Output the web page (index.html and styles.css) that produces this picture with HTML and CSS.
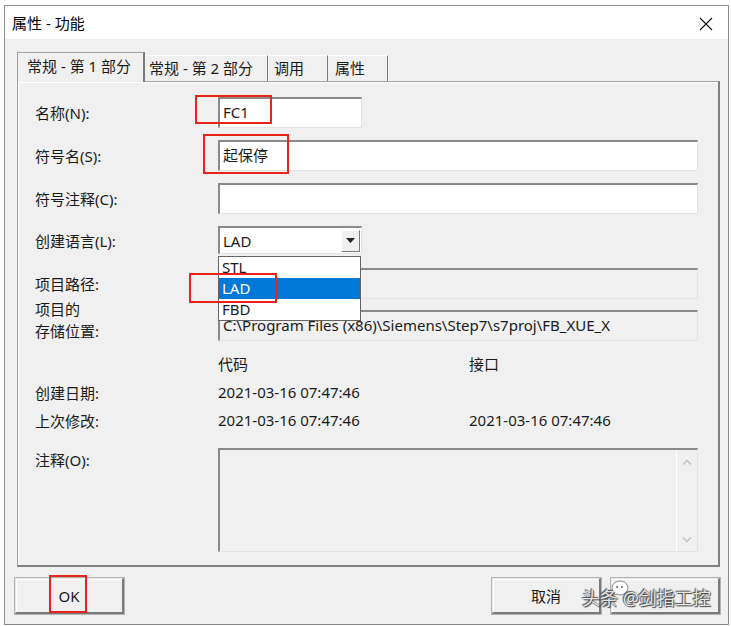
FILE: index.html
```html
<!DOCTYPE html>
<html lang="zh-CN">
<head>
    <meta charset="UTF-8">
    <title>属性 - 功能</title>
    <link rel="stylesheet" href="styles.css">
</head>
<body>
    <div class="window">
        <div class="titlebar">
            <span class="title">属性 - 功能</span>
            <svg class="close" width="14" height="14" viewBox="0 0 14 14"><path d="M1 1 L13 13 M13 1 L1 13" stroke="#111" stroke-width="1.1" fill="none"/></svg>
        </div>
        <div class="content">
            <div class="tabs">
                <div class="tab active t1">常规 - 第 1 部分</div>
                <div class="tab t2">常规 - 第 2 部分</div>
                <div class="tab t3">调用</div>
                <div class="tab t4">属性</div>
            </div>
            <div class="panel">
                <div class="row r1">
                    <span class="label">名称(N):</span>
                    <div class="field-wrap">
                        <div class="edit short">FC1</div>
                        <span class="mark mark-name"></span>
                    </div>
                </div>
                <div class="row r2">
                    <span class="label">符号名(S):</span>
                    <div class="field-wrap">
                        <div class="edit">起保停</div>
                        <span class="mark mark-symbol"></span>
                    </div>
                </div>
                <div class="row r3">
                    <span class="label">符号注释(C):</span>
                    <div class="field-wrap">
                        <div class="edit"></div>
                    </div>
                </div>
                <div class="row r4">
                    <span class="label">创建语言(L):</span>
                    <div class="field-wrap">
                        <div class="combo">
                            <span class="combo-text">LAD</span>
                            <span class="combo-btn"><svg width="9" height="5" viewBox="0 0 9 5"><path d="M0 0 H9 L4.5 5 Z" fill="#222"/></svg></span>
                        </div>
                        <ul class="dropdown">
                            <li>STL</li>
                            <li class="selected">LAD</li>
                            <li>FBD</li>
                        </ul>
                        <span class="mark mark-lad"></span>
                    </div>
                </div>
                <div class="row r5">
                    <span class="label">项目路径:</span>
                    <div class="field-wrap">
                        <div class="edit disabled"></div>
                    </div>
                </div>
                <div class="row r6">
                    <span class="label two-line">项目的<br>存储位置:</span>
                    <div class="field-wrap">
                        <div class="edit disabled">C:\Program Files (x86)\Siemens\Step7\s7proj\FB_XUE_X</div>
                    </div>
                </div>
                <div class="row info r7">
                    <span class="label"></span>
                    <span class="col">代码</span>
                    <span class="col">接口</span>
                </div>
                <div class="row info r8">
                    <span class="label">创建日期:</span>
                    <span class="col">2021-03-16 07:47:46</span>
                    <span class="col"></span>
                </div>
                <div class="row info r9">
                    <span class="label">上次修改:</span>
                    <span class="col">2021-03-16 07:47:46</span>
                    <span class="col">2021-03-16 07:47:46</span>
                </div>
                <div class="row r10">
                    <span class="label">注释(O):</span>
                    <div class="field-wrap">
                        <div class="memo">
                            <div class="scrollbar">
                                <svg width="10" height="6" viewBox="0 0 10 6"><path d="M1 5.5 L5 1.5 L9 5.5" stroke="#c4c4c4" stroke-width="1.6" fill="none"/></svg>
                                <svg width="10" height="6" viewBox="0 0 10 6"><path d="M1 0.5 L5 4.5 L9 0.5" stroke="#c4c4c4" stroke-width="1.6" fill="none"/></svg>
                            </div>
                        </div>
                    </div>
                </div>
            </div>
            <div class="footer">
                <div class="btn-wrap">
                    <button class="btn">OK</button>
                    <span class="mark mark-ok"></span>
                </div>
                <div class="right-btns">
                    <button class="btn">取消</button>
                    <button class="btn wide"></button>
                </div>
            </div>
        </div>
        <div class="watermark">
            <svg class="wm-icon" width="22" height="20" viewBox="0 0 22 20"><path d="M3 10 a8 7 0 1 1 4 6 L3 18 L4.5 14 A8 7 0 0 1 3 10 Z" fill="rgba(255,255,255,0.85)" stroke="rgba(60,60,60,0.6)" stroke-width="1"/><circle cx="8" cy="9" r="1" fill="#666"/><circle cx="13" cy="9" r="1" fill="#666"/></svg>
            <span>头条 @剑指工控</span>
        </div>
    </div>
</body>
</html>
```

FILE: styles.css
```css
body {
    margin: 0;
    background: #ffffff;
    font-family: "Noto Sans", "Noto Sans CJK SC", sans-serif;
    font-size: 15px;
    color: #1a1a1a;
}
.window {
    position: relative;
    width: 723px;
    height: 618px;
    margin: 5px 0 0 4px;
    border: 1px solid #8c8c8c;
    background: #f0f0f0;
    display: flex;
    flex-direction: column;
}
.titlebar {
    height: 33px;
    background: #ffffff;
    display: flex;
    align-items: center;
    justify-content: space-between;
    padding: 0 15px 0 7px;
}
.title {
    font-size: 15px;
    color: #000;
}
.close {
    margin-top: 2px;
}
.content {
    flex: 1;
    padding: 13px 8px 0 12px;
    display: flex;
    flex-direction: column;
}
/* tabs */
.tabs {
    display: flex;
    align-items: flex-end;
    height: 29px;
}
.tab {
    height: 26px;
    box-sizing: border-box;
    border-top: 1px solid #ffffff;
    border-right: 1px solid #7a7a7a;
    line-height: 24px;
    white-space: nowrap;
}
.tab.active {
    height: 30px;
    margin-bottom: -1px;
    border-left: 1px solid #a0a0a0;
    border-top: 1px solid #a0a0a0;
    border-right: 2px solid #7a7a7a;
    background: #f0f0f0;
    position: relative;
    z-index: 1;
    line-height: 26px;
}
.t1 { width: 128px; padding-left: 9px; }
.t2 { width: 123px; padding-left: 4px; }
.t3 { width: 60px; padding-left: 6px; }
.t4 { width: 60px; padding-left: 7px; }
/* panel */
.panel {
    height: 486px;
    box-sizing: border-box;
    border-left: 1px solid #a0a0a0;
    border-top: 1px solid #a0a0a0;
    border-right: 2px solid #7f7f7f;
    border-bottom: 2px solid #7f7f7f;
    box-shadow: inset 1px 1px 0 #ffffff;
    padding: 15px 20px 0 17px;
    display: flex;
    flex-direction: column;
}
.row {
    display: flex;
    align-items: center;
}
.label {
    width: 183px;
    flex-shrink: 0;
    white-space: nowrap;
}
.field-wrap {
    position: relative;
    flex: 1;
}
.edit {
    height: 31px;
    box-sizing: border-box;
    background: #ffffff;
    border-top: 2px solid #8a8a8a;
    border-left: 2px solid #8a8a8a;
    border-right: 1px solid #e3e3e3;
    border-bottom: 1px solid #e3e3e3;
    padding: 0 3px;
    line-height: 27px;
    white-space: nowrap;
    overflow: hidden;
}
.edit.short {
    width: 144px;
}
.edit.disabled {
    background: #f0f0f0;
}
.r2, .r3 { margin-top: 12px; }
.r4 { margin-top: 12px; }
.r5 { margin-top: 14px; }
.r6 {
    margin-top: 11px;
    height: 31px;
    align-items: flex-end;
}
.two-line {
    line-height: 22px;
    margin-bottom: -1px;
}
.info {
    height: 20px;
}
.r7 { margin-top: 12px; }
.r8 { margin-top: 9px; }
.r9 { margin-top: 8px; }
.col {
    width: 251px;
    flex-shrink: 0;
    white-space: nowrap;
}
.r10 {
    margin-top: 18px;
    align-items: flex-start;
}
.r10 .label {
    margin-top: 1px;
}
/* combo box */
.combo {
    width: 144px;
    height: 28px;
    box-sizing: border-box;
    background: #ffffff;
    border-top: 2px solid #8a8a8a;
    border-left: 2px solid #8a8a8a;
    border-right: 1px solid #e3e3e3;
    border-bottom: 1px solid #e3e3e3;
    display: flex;
    align-items: center;
    justify-content: space-between;
    padding: 0 1px 0 3px;
}
.combo-btn {
    width: 19px;
    height: 22px;
    box-sizing: border-box;
    background: #f0f0f0;
    border-top: 1px solid #ffffff;
    border-left: 1px solid #ffffff;
    border-right: 1px solid #7a7a7a;
    border-bottom: 1px solid #7a7a7a;
    display: flex;
    align-items: center;
    justify-content: center;
}
.dropdown {
    position: absolute;
    left: 0;
    top: 30px;
    width: 143px;
    margin: 0;
    padding: 0;
    list-style: none;
    background: #ffffff;
    border: 1px solid #646464;
    box-sizing: border-box;
    z-index: 5;
}
.dropdown li {
    height: 21px;
    line-height: 21px;
    padding-left: 3px;
}
.dropdown li.selected {
    background: #0078d7;
    color: #ffffff;
}
/* comment box */
.memo {
    height: 104px;
    box-sizing: border-box;
    background: #f0f0f0;
    border-top: 2px solid #8a8a8a;
    border-left: 2px solid #8a8a8a;
    border-right: 1px solid #e3e3e3;
    border-bottom: 1px solid #e3e3e3;
    display: flex;
    justify-content: flex-end;
}
.scrollbar {
    width: 20px;
    border-left: 1px solid #ffffff;
    display: flex;
    flex-direction: column;
    justify-content: space-between;
    align-items: center;
    padding: 9px 0 8px;
}
/* red annotation boxes */
.mark {
    position: absolute;
    border: 2px solid #e8221c;
    box-sizing: border-box;
    z-index: 6;
}
.mark-name {
    left: -23px;
    top: -2px;
    width: 77px;
    height: 29px;
}
.mark-symbol {
    left: -15px;
    top: -6px;
    width: 86px;
    height: 40px;
}
.mark-lad {
    left: -29px;
    top: 47px;
    width: 88px;
    height: 30px;
}
.mark-ok {
    left: 34px;
    top: -3px;
    width: 38px;
    height: 38px;
}
/* footer buttons */
.footer {
    display: flex;
    justify-content: space-between;
    margin: 11px 0 0 -2px;
}
.btn-wrap {
    position: relative;
}
.right-btns {
    display: flex;
    gap: 10px;
}
.btn {
    width: 109px;
    height: 36px;
    box-sizing: border-box;
    background: #f0f0f0;
    border-top: 1px solid #e6e6e6;
    border-left: 1px solid #e6e6e6;
    border-right: 2px solid #7a7a7a;
    border-bottom: 2px solid #7a7a7a;
    box-shadow: inset 1px 1px 0 #ffffff, 0 0 0 1px #b4b4b4;
    font-family: "Noto Sans", "Noto Sans CJK SC", sans-serif;
    font-size: 15px;
    color: #1a1a1a;
    padding: 0;
}
.btn.wide {
    width: 109px;
}
.watermark {
    position: absolute;
    left: 577px;
    top: 578px;
    display: flex;
    align-items: center;
    font-size: 18px;
    color: rgba(255, 255, 255, 0.9);
    text-shadow: 0 0 1px #333, 1px 1px 1px #444, -1px -1px 1px #555;
    z-index: 8;
}
.wm-icon {
    position: absolute;
    left: 27px;
    top: -6px;
}
.watermark span {
    position: relative;
}
```
